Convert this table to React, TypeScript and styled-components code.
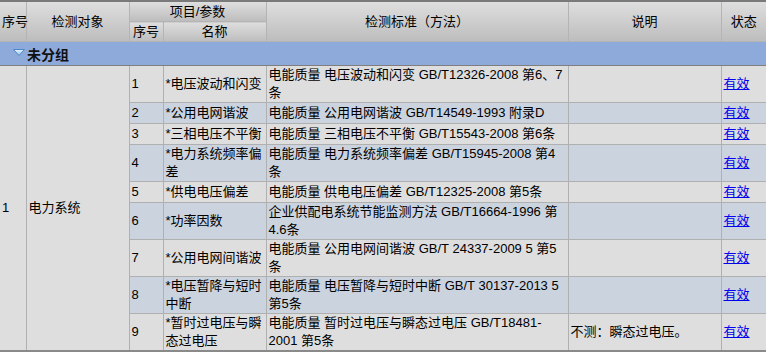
import styled, { createGlobalStyle } from "styled-components";

const GlobalStyle = createGlobalStyle`
    html, body {
        margin: 0;
        padding: 0;
        background: #ffffff;
    }
    body {
        font-family: "Liberation Sans", "Noto Sans CJK SC", sans-serif;
        font-size: 13px;
        color: #000;
    }
`;

const Table = styled.table`
    width: 766px;
    table-layout: fixed;
    border-collapse: collapse;
    border-top: 2px solid #7a7a7a;
    border-bottom: 2px solid #8a8a8a;
    font-size: 13px;
`;

const HeadCell = styled.th`
    font-weight: normal;
    text-align: center;
    vertical-align: middle;
    padding: 0 2px;
    height: 19px;
    line-height: 17px;
    border: 1px solid #b4b4b4;
    border-top: none;
    background: linear-gradient(#dedede, #bdbdbd);
    white-space: nowrap;
    &:first-child { border-left: none; }
    &:last-child { border-right: none; }
`;

const GroupRow = styled.tr`
    background: #8eaadb;
    height: 24px;
`;

const GroupCell = styled.td`
    padding: 0 0 0 13px;
    font-weight: bold;
    font-size: 14px;
    color: #111;
    border-bottom: 1px solid #7f7f7f;
    svg {
        vertical-align: 4px;
        margin-right: 2px;
    }
`;

const Row = styled.tr<{ $alt?: boolean }>`
    height: 21px;
    background: ${p => (p.$alt ? "#cbd3df" : "#dedede")};
`;

const Cell = styled.td<{ $gray?: boolean }>`
    padding: 0 2px;
    line-height: 18px;
    vertical-align: middle;
    border: 1px solid #b0b0b0;
    border-top: none;
    overflow-wrap: anywhere;
    background: ${p => (p.$gray ? "#dedede" : "transparent")};
    &:first-child { border-left: none; }
    &:last-child { border-right: none; }
`;

const Link = styled.a`
    color: #0000ee;
    text-decoration: underline;
    cursor: pointer;
`;

const items = [
    { name: "电压波动和闪变", std: "电能质量 电压波动和闪变 GB/T12326-2008 第6、7条", note: "" },
    { name: "公用电网谐波", std: "电能质量 公用电网谐波 GB/T14549-1993 附录D", note: "" },
    { name: "三相电压不平衡", std: "电能质量 三相电压不平衡 GB/T15543-2008 第6条", note: "" },
    { name: "电力系统频率偏差", std: "电能质量 电力系统频率偏差 GB/T15945-2008 第4条", note: "" },
    { name: "供电电压偏差", std: "电能质量 供电电压偏差 GB/T12325-2008 第5条", note: "" },
    { name: "功率因数", std: "企业供配电系统节能监测方法 GB/T16664-1996 第4.6条", note: "" },
    { name: "公用电网间谐波", std: "电能质量 公用电网间谐波 GB/T 24337-2009 5 第5条", note: "" },
    { name: "电压暂降与短时中断", std: "电能质量 电压暂降与短时中断 GB/T 30137-2013 5 第5条", note: "" },
    { name: "暂时过电压与瞬态过电压", std: "电能质量 暂时过电压与瞬态过电压 GB/T18481-2001 第5条", note: "不测：瞬态过电压。" },
];

function Triangle() {
    return (
        <svg width="12" height="7" viewBox="0 0 12 7">
            <defs>
                <linearGradient id="tri" x1="0" y1="0" x2="0" y2="1">
                    <stop offset="0" stopColor="#e6f4ff" />
                    <stop offset="1" stopColor="#8fc4ee" />
                </linearGradient>
            </defs>
            <polygon points="0.5,0.5 11.5,0.5 6,6.5" fill="url(#tri)" stroke="#4f86c6" strokeWidth="1" />
        </svg>
    );
}

export default function App() {
    return (
        <>
            <GlobalStyle />
            <Table>
                <colgroup>
                    <col style={{ width: 26 }} />
                    <col style={{ width: 103 }} />
                    <col style={{ width: 34 }} />
                    <col style={{ width: 103 }} />
                    <col style={{ width: 302 }} />
                    <col style={{ width: 153 }} />
                    <col style={{ width: 45 }} />
                </colgroup>
                <thead>
                    <tr>
                        <HeadCell rowSpan={2}>序号</HeadCell>
                        <HeadCell rowSpan={2}>检测对象</HeadCell>
                        <HeadCell colSpan={2}>项目/参数</HeadCell>
                        <HeadCell rowSpan={2}>检测标准（方法）</HeadCell>
                        <HeadCell rowSpan={2}>说明</HeadCell>
                        <HeadCell rowSpan={2}>状态</HeadCell>
                    </tr>
                    <tr>
                        <HeadCell>序号</HeadCell>
                        <HeadCell>名称</HeadCell>
                    </tr>
                </thead>
                <tbody>
                    <GroupRow>
                        <GroupCell colSpan={7}>
                            <Triangle />未分组
                        </GroupCell>
                    </GroupRow>
                    {items.map((it, i) => (
                        <Row key={i} $alt={i % 2 === 1}>
                            {i === 0 && (
                                <>
                                    <Cell $gray rowSpan={items.length}>1</Cell>
                                    <Cell $gray rowSpan={items.length}>电力系统</Cell>
                                </>
                            )}
                            <Cell>{i + 1}</Cell>
                            <Cell>*{it.name}</Cell>
                            <Cell>{it.std}</Cell>
                            <Cell>{it.note}</Cell>
                            <Cell>
                                <Link>有效</Link>
                            </Cell>
                        </Row>
                    ))}
                </tbody>
            </Table>
        </>
    );
}
